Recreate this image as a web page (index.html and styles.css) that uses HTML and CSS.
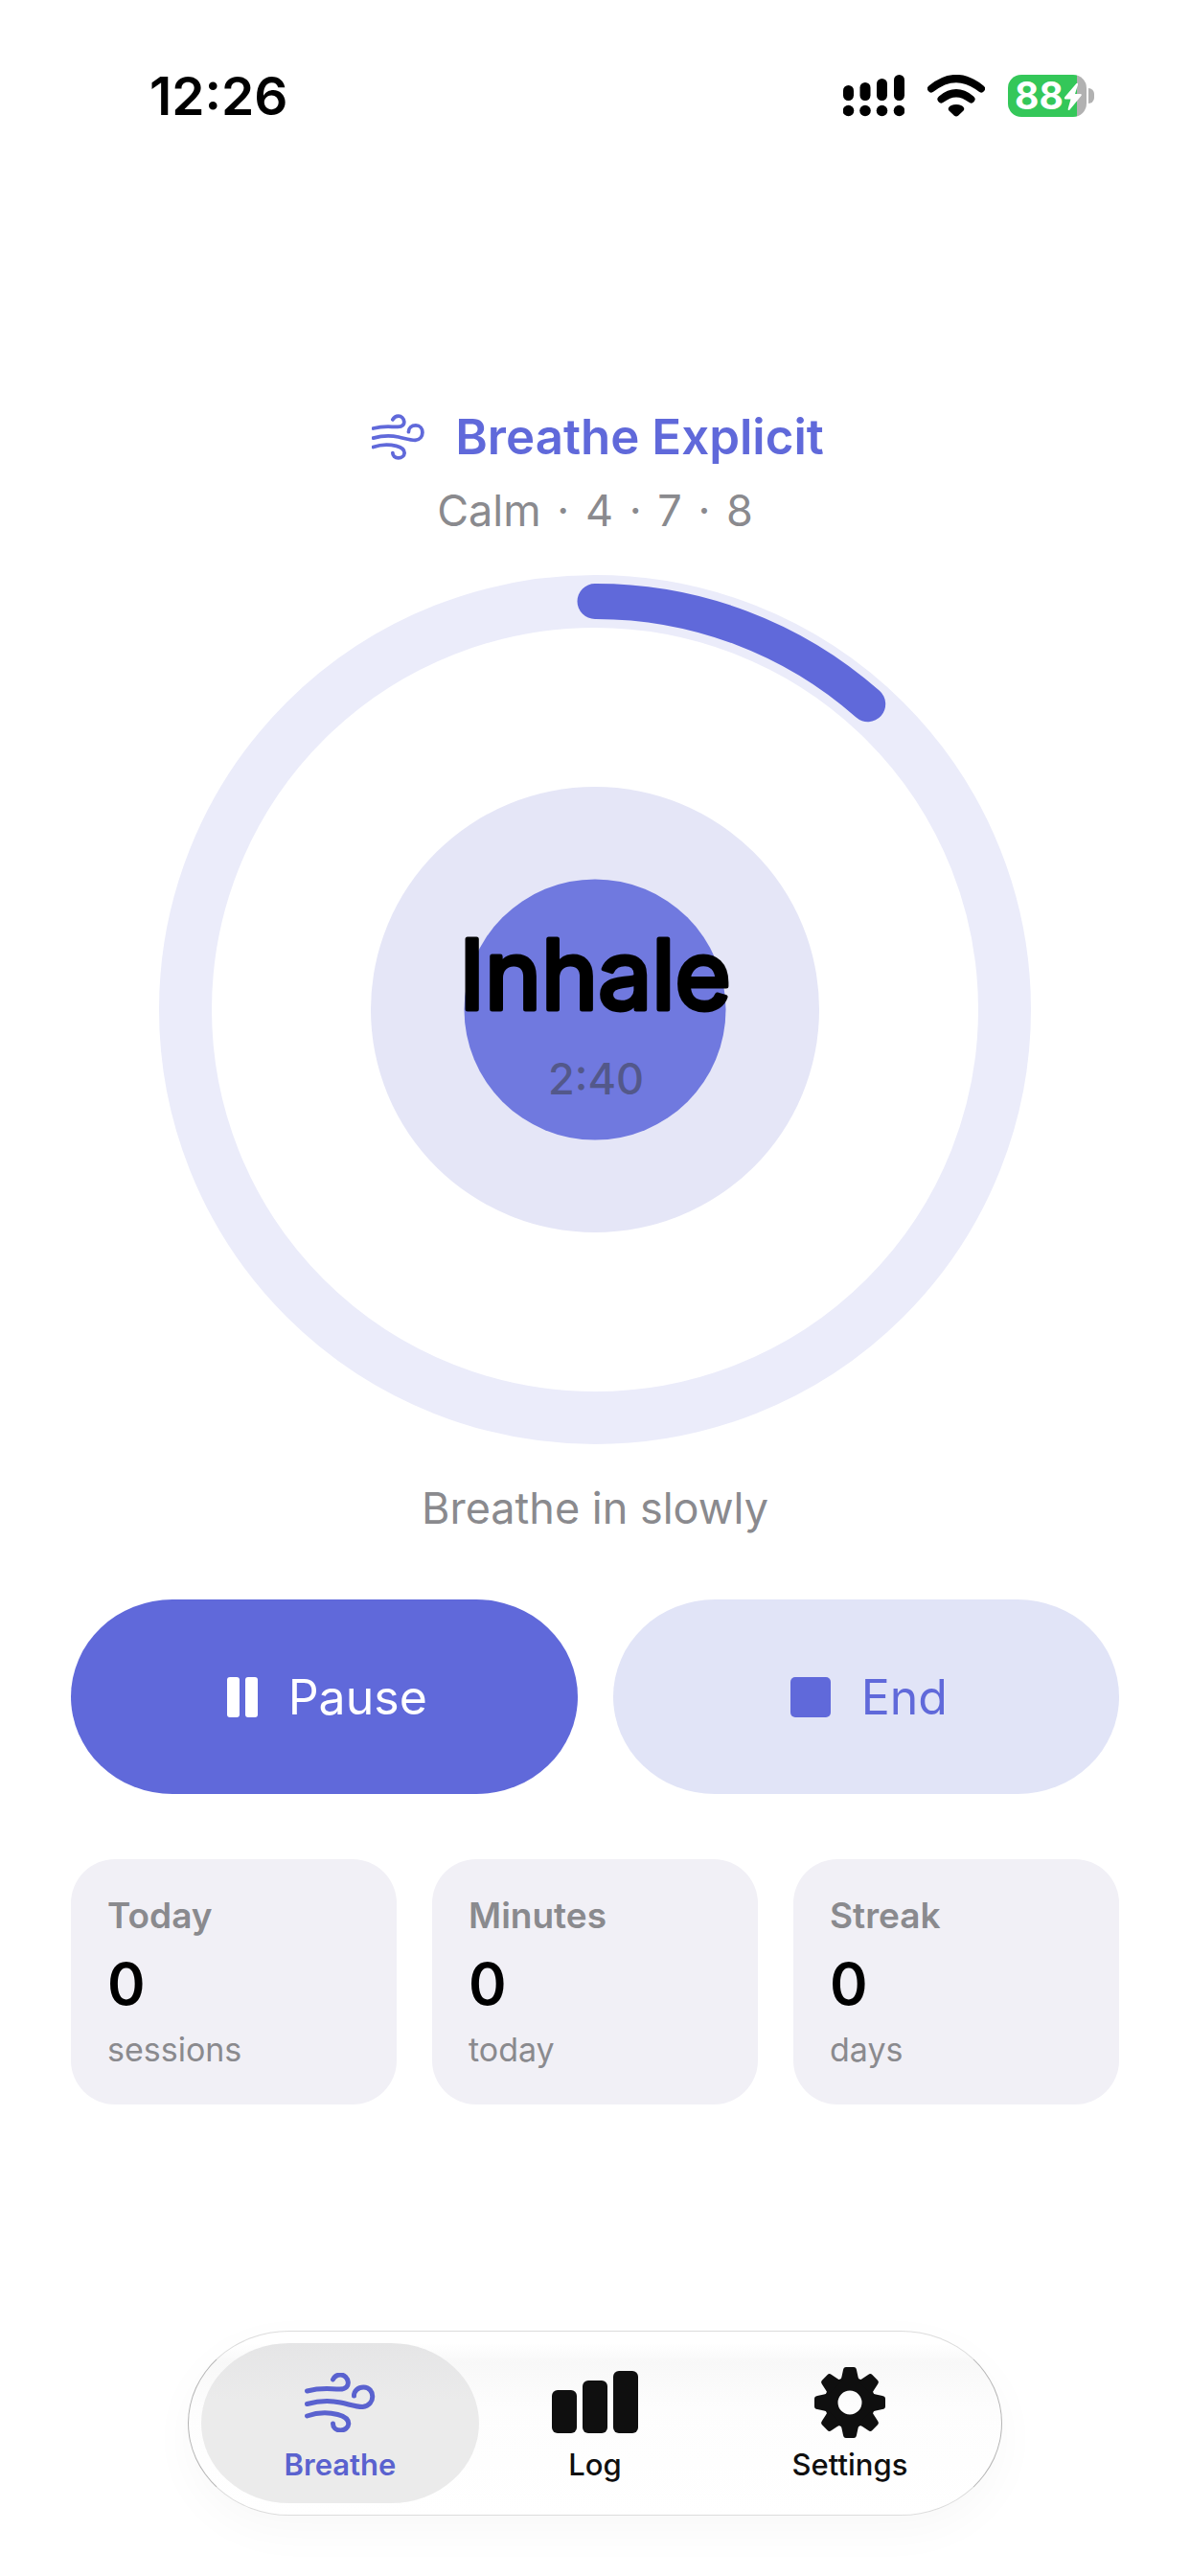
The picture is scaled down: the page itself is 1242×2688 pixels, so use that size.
FILE: index.html
```html
<!DOCTYPE html>
<html lang="en">
<head>
    <meta charset="UTF-8">
    <meta name="viewport" content="width=device-width, initial-scale=1.0">
    <title>Breathe Explicit</title>
    <link rel="stylesheet" href="styles.css">
</head>
<body>
    <!-- wind icon, used in the title and in the tab bar -->
    <svg class="sprite" aria-hidden="true">
        <symbol id="wind" viewBox="0 0 73 62">
            <path d="M2 19C18 15 25 17 36 17C50 17 45 2 37 2C32 2 30 5 29 7M2 32.500C14 29 24 28 37 31C48 33.500 53 35.500 60 35.500C74 34 73 15 61 15C55 15 51 19 51 24M2 45C12 41.500 24 41 34 43.500C51 48 46 60 37 60C32 60 29 57 29 53"/>
        </symbol>
    </svg>

    <header class="status-bar">
        <span class="time">12:26</span>
        <div class="status-icons">
            <svg class="signal" viewBox="0 0 64 44">
                <rect x="0" y="11" width="11" height="16" rx="5.500"/>
                <rect x="17.500" y="8" width="11" height="19" rx="5.500"/>
                <rect x="35" y="4" width="11" height="23" rx="5.500"/>
                <rect x="53" y="0" width="11" height="27" rx="5.500"/>
                <circle cx="5.500" cy="37.500" r="5.800"/>
                <circle cx="23" cy="37.500" r="5.800"/>
                <circle cx="40.500" cy="37.500" r="5.800"/>
                <circle cx="58.500" cy="37.500" r="5.800"/>
            </svg>
            <svg class="wifi" viewBox="0 0 60 44">
                <path class="wave" d="M4 14.500Q30 -6.500 56 14.500M14.500 25.500Q30 13 45.500 25.500"/>
                <path d="M30 31c4 0 7 1.500 8 3.500c.6 1.500 0 2.500-1 3.500l-5 4.800q-2 1.600-4 0l-5-4.800c-1-1-1.600-2-1-3.500c1-2 4-3.500 8-3.500z"/>
            </svg>
            <div class="battery">
                <span class="battery-level">88</span>
                <svg class="bolt" viewBox="0 0 20 30">
                    <path d="M13.500 1Q15.500 0 15 2.500L12 12H17.500Q20 12.500 18 14.500L6.500 28.500Q4 30 4.800 27L7.500 17.500H2Q0 17 1.500 15z"/>
                </svg>
            </div>
        </div>
    </header>

    <main>
        <h1 class="app-title">
            <svg class="title-icon"><use href="#wind"/></svg>
            Breathe Explicit
        </h1>
        <p class="pattern">Calm <span class="dot">·</span> 4 <span class="dot">·</span> 7 <span class="dot">·</span> 8</p>

        <!-- progress ring with the phase and the time left -->
        <svg class="ring" viewBox="0 0 910 907">
            <ellipse class="ring-track" cx="455" cy="453.500" rx="427.500" ry="426"/>
            <path class="ring-progress" d="M455 27.500A427.500 426 0 0 1 739.700 134.700"/>
            <ellipse class="halo" cx="455" cy="453.500" rx="234" ry="232.500"/>
            <ellipse class="core" cx="455" cy="453.500" rx="136.500" ry="136"/>
            <text class="phase" x="455" y="453">Inhale</text>
            <text class="remaining" x="456" y="542">2:40</text>
        </svg>

        <p class="hint">Breathe in slowly</p>

        <div class="actions">
            <button type="button" class="btn btn-pause">
                <svg class="pause-icon" viewBox="0 0 32 42">
                    <rect width="13" height="42" rx="3"/>
                    <rect x="19" width="13" height="42" rx="3"/>
                </svg>
                Pause
            </button>
            <button type="button" class="btn btn-end">
                <svg class="stop-icon" viewBox="0 0 42 42">
                    <rect width="42" height="42" rx="5"/>
                </svg>
                End
            </button>
        </div>

        <section class="stats">
            <div class="card">
                <h2>Today</h2>
                <p class="value">0</p>
                <p class="unit">sessions</p>
            </div>
            <div class="card">
                <h2>Minutes</h2>
                <p class="value">0</p>
                <p class="unit">today</p>
            </div>
            <div class="card">
                <h2>Streak</h2>
                <p class="value">0</p>
                <p class="unit">days</p>
            </div>
        </section>
    </main>

    <nav class="tab-bar">
        <a href="#" class="tab active">
            <svg class="tab-icon"><use href="#wind"/></svg>
            Breathe
        </a>
        <a href="#" class="tab">
            <svg class="tab-icon" viewBox="0 0 90 74">
                <rect x="0" y="24" width="26" height="45" rx="6"/>
                <rect x="32" y="14" width="26" height="55" rx="6"/>
                <rect x="64" y="4" width="26" height="65" rx="6"/>
            </svg>
            Log
        </a>
        <a href="#" class="tab">
            <svg class="tab-icon" viewBox="-37 -37 74 74">
                <defs>
                    <path id="tooth" d="M-11 -22L-9.500 -24Q-9 -25 -8.500 -27L-7 -34Q-6.500 -37 -4 -37H4Q6.500 -37 7 -34L8.500 -27Q9 -25 9.500 -24L11 -22z"/>
                </defs>
                <circle class="gear-body" r="19.500"/>
                <use href="#tooth"/>
                <use href="#tooth" transform="rotate(45)"/>
                <use href="#tooth" transform="rotate(90)"/>
                <use href="#tooth" transform="rotate(135)"/>
                <use href="#tooth" transform="rotate(180)"/>
                <use href="#tooth" transform="rotate(225)"/>
                <use href="#tooth" transform="rotate(270)"/>
                <use href="#tooth" transform="rotate(315)"/>
            </svg>
            Settings
        </a>
    </nav>
</body>
</html>
```
FILE: styles.css
```css
* {
    box-sizing: border-box;
}

body {
    font-family: Inter, "Liberation Sans", sans-serif;
    background-color: #fff;
    color: #000;
    margin: 0;
    min-height: 100vh;
    display: flex;
    flex-direction: column;
}

h1, h2, p {
    margin: 0;
}

.sprite {
    position: absolute;
    width: 0;
    height: 0;
}

/* status bar */
.status-bar {
    display: flex;
    justify-content: space-between;
    align-items: center;
    padding: 66px 100px 0 156px;
}

.time {
    font-size: 55px;
    line-height: 68px;
    font-weight: 600;
}

.status-icons {
    display: flex;
    align-items: center;
    gap: 24px;
}

.signal {
    width: 64px;
    height: 44px;
}

.wifi {
    width: 60px;
    height: 44px;
}

.wave {
    fill: none;
    stroke: #000;
    stroke-width: 8;
    stroke-linecap: round;
}

.battery {
    position: relative;
    display: flex;
    align-items: center;
    width: 82px;
    height: 44px;
    margin-right: 8px;
    padding-left: 7px;
    border-radius: 14px;
    background: linear-gradient(to right, #34c759 72px, #b1b1b1 72px);
    color: #fff;
}

.battery::after {
    content: "";
    position: absolute;
    right: -8px;
    top: 14px;
    width: 6px;
    height: 16px;
    border-radius: 0 8px 8px 0;
    background-color: #b1b1b1;
}

.battery-level {
    font-size: 39px;
    line-height: 44px;
    font-weight: 700;
}

.bolt {
    position: absolute;
    right: 4px;
    top: 8px;
    width: 20px;
    height: 30px;
    fill: #fff;
}

/* session */
main {
    display: flex;
    flex-direction: column;
    align-items: center;
    padding: 292px 74px 0;
}

.app-title {
    display: flex;
    align-items: center;
    gap: 32px;
    padding-left: 6px;
    font-size: 51px;
    line-height: 60px;
    font-weight: 600;
    color: #6069da;
}

.title-icon {
    width: 55px;
    height: 48px;
    fill: none;
    stroke: #6069da;
    stroke-width: 5;
    stroke-linecap: round;
}

.pattern,
.hint {
    font-size: 45px;
    line-height: 54px;
    color: #8a8a8e;
}

.pattern {
    margin: 20px 0 40px;
}

.dot {
    margin: 0 4px;
}

.ring {
    width: 100%;
    max-width: 910px;
    text-anchor: middle;
}

.ring-track {
    fill: none;
    stroke: #ebecfa;
    stroke-width: 55;
}

.ring-progress {
    fill: none;
    stroke: #6069da;
    stroke-width: 37;
    stroke-linecap: round;
}

.halo {
    fill: #e5e6f7;
}

.core {
    fill: #7079df;
}

/* the round stroke softens the letter ends */
.phase {
    font-size: 100px;
    font-weight: 400;
    stroke: #000;
    stroke-width: 5;
    stroke-linejoin: round;
}

.remaining {
    font-size: 45px;
    font-weight: 500;
    fill: #53588a;
}

.hint {
    margin-top: 40px;
}

.actions,
.stats {
    display: flex;
    gap: 37px;
    width: 100%;
    margin-top: 68px;
}

.btn {
    flex: 1;
    display: flex;
    justify-content: center;
    align-items: center;
    gap: 32px;
    height: 203px;
    padding: 0 0 0 6px;
    border: none;
    border-radius: 106px / 50%;
    font-family: inherit;
    font-size: 50px;
    line-height: 60px;
    cursor: pointer;
}

.btn svg {
    height: 42px;
    fill: currentColor;
}

.pause-icon {
    width: 32px;
}

.stop-icon {
    width: 42px;
}

.btn-pause {
    background-color: #6069da;
    color: #fff;
}

.btn-end {
    background-color: #e1e4f7;
    color: #6069da;
}

.card {
    flex: 1;
    display: flex;
    flex-direction: column;
    gap: 13px;
    padding: 37px 38px;
    border-radius: 46px;
    background-color: #f1f0f6;
    color: #8a8a8e;
}

.card h2 {
    font-size: 37px;
    line-height: 44px;
    font-weight: 600;
}

.value {
    font-size: 60px;
    line-height: 72px;
    font-weight: 600;
    color: #000;
}

.unit {
    font-size: 34px;
    line-height: 40px;
}

/* tab bar */
.tab-bar {
    display: flex;
    align-self: center;
    margin: auto 0 63px;
    padding: 12px 13px;
    border: 1px solid #dcdcdc;
    border-left-color: #b4b4b4;
    border-right-color: #b4b4b4;
    border-radius: 106px / 50%;
    background: linear-gradient(#fff 12px, #f8f8f8 32px, #fdfdfd 80px, #fff);
    box-shadow: 0 16px 48px rgba(0, 0, 0, 0.03);
}

.tab {
    display: flex;
    flex-direction: column;
    align-items: center;
    gap: 10px;
    width: 290px;
    height: 167px;
    padding-top: 25px;
    border-radius: 92px / 50%;
    color: #0f0f0f;
    font-size: 31px;
    line-height: 36px;
    font-weight: 500;
    text-decoration: none;
}

.tab + .tab {
    margin-left: -24px;
}

.tab.active {
    background: linear-gradient(#e5e5e6, #ebebeb 60px);
    color: #5a62cf;
    font-weight: 600;
}

.tab-icon {
    width: 90px;
    height: 74px;
    fill: currentColor;
}

.tab.active .tab-icon {
    padding: 6px 0;
    fill: none;
    stroke: currentColor;
    stroke-width: 5;
    stroke-linecap: round;
}

.gear-body {
    fill: none;
    stroke: currentColor;
    stroke-width: 14;
}
```
